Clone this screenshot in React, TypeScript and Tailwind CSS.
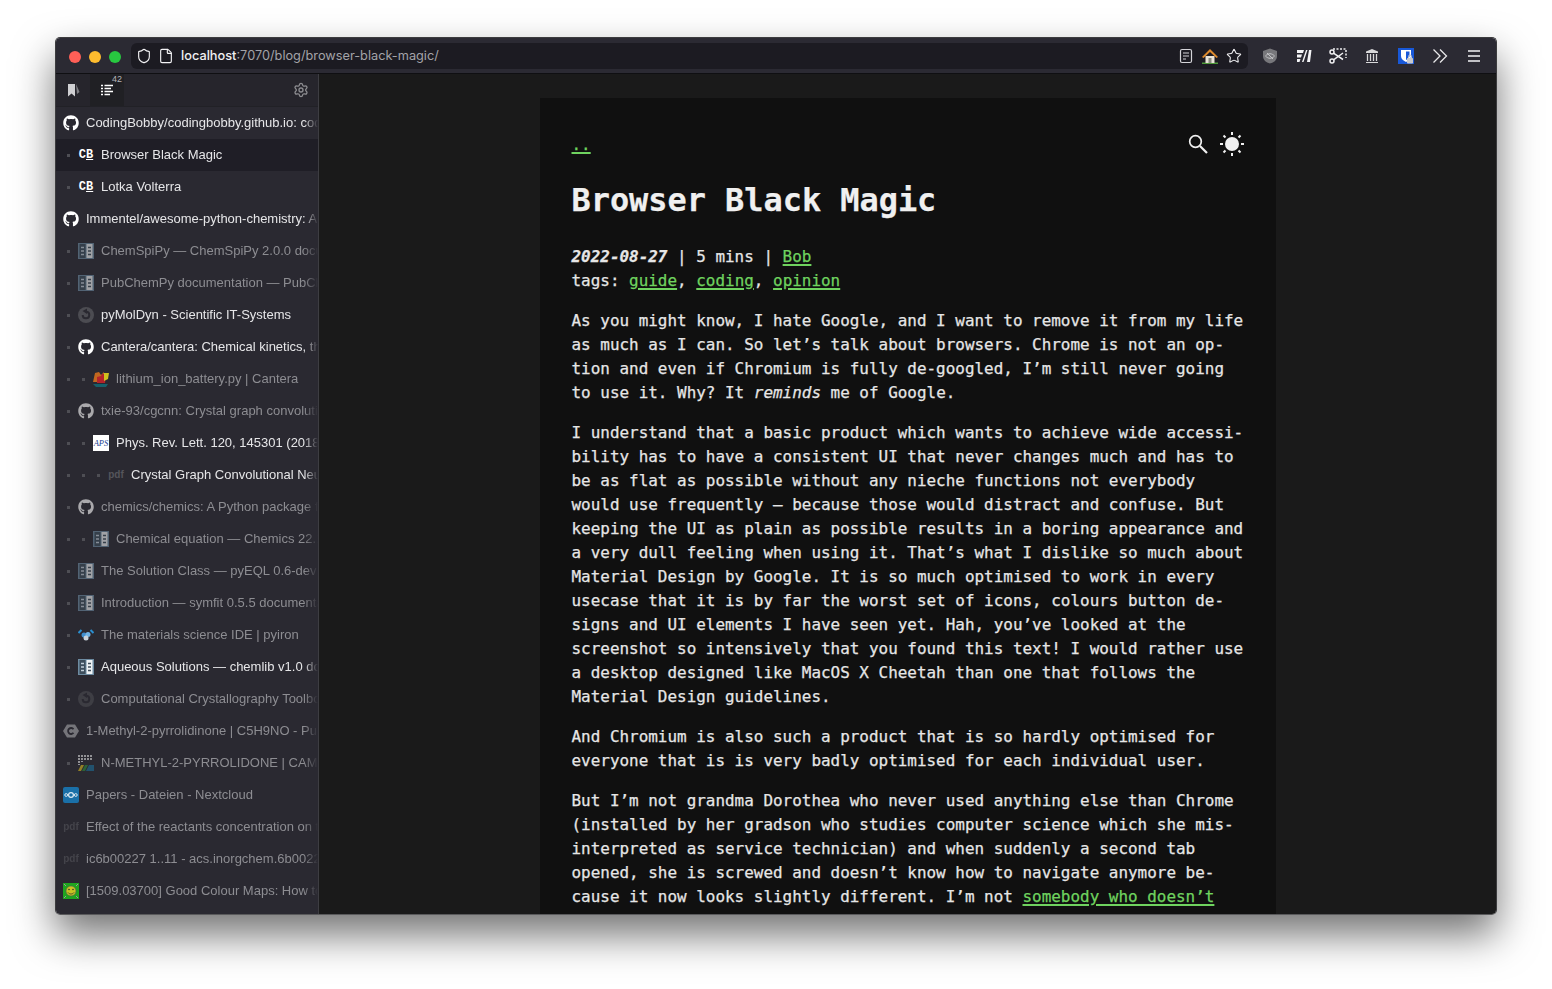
import React from 'react';
import { FaGithub } from 'react-icons/fa';
import { File, Settings, Shield, Star } from 'lucide-react';

type IconKind = 'github' | 'cb' | 'docs' | 'spin' | 'flame' | 'aps' | 'pdf' | 'pyiron' | 'hex' | 'cam' | 'cloud' | 'smile';

interface Row {
    title: string;
    level: number;
    icon: IconKind;
    dim?: boolean;
    active?: boolean;
}

const rows: Row[] = [
    { title: 'CodingBobby/codingbobby.github.io: coding blog', level: 0, icon: 'github' },
    { title: 'Browser Black Magic', level: 1, icon: 'cb', active: true },
    { title: 'Lotka Volterra', level: 1, icon: 'cb' },
    { title: 'Immentel/awesome-python-chemistry: A curated list', level: 0, icon: 'github' },
    { title: 'ChemSpiPy — ChemSpiPy 2.0.0 documentation', level: 1, icon: 'docs', dim: true },
    { title: 'PubChemPy documentation — PubChemPy', level: 1, icon: 'docs', dim: true },
    { title: 'pyMolDyn - Scientific IT-Systems', level: 1, icon: 'spin' },
    { title: 'Cantera/cantera: Chemical kinetics, thermodynamics', level: 1, icon: 'github' },
    { title: 'lithium_ion_battery.py | Cantera', level: 2, icon: 'flame', dim: true },
    { title: 'txie-93/cgcnn: Crystal graph convolutional', level: 1, icon: 'github', dim: true },
    { title: 'Phys. Rev. Lett. 120, 145301 (2018)', level: 2, icon: 'aps' },
    { title: 'Crystal Graph Convolutional Neural', level: 3, icon: 'pdf' },
    { title: 'chemics/chemics: A Python package for', level: 1, icon: 'github', dim: true },
    { title: 'Chemical equation — Chemics 22.1', level: 2, icon: 'docs', dim: true },
    { title: 'The Solution Class — pyEQL 0.6-dev documentation', level: 1, icon: 'docs', dim: true },
    { title: 'Introduction — symfit 0.5.5 documentation', level: 1, icon: 'docs', dim: true },
    { title: 'The materials science IDE | pyiron', level: 1, icon: 'pyiron', dim: true },
    { title: 'Aqueous Solutions — chemlib v1.0 documentation', level: 1, icon: 'docs' },
    { title: 'Computational Crystallography Toolbox', level: 1, icon: 'spin', dim: true },
    { title: '1-Methyl-2-pyrrolidinone | C5H9NO - PubChem', level: 0, icon: 'hex', dim: true },
    { title: 'N-METHYL-2-PYRROLIDONE | CAMEO Chemicals', level: 1, icon: 'cam', dim: true },
    { title: 'Papers - Dateien - Nextcloud', level: 0, icon: 'cloud', dim: true },
    { title: 'Effect of the reactants concentration on the', level: 0, icon: 'pdf', dim: true },
    { title: 'ic6b00227 1..11 - acs.inorgchem.6b00227', level: 0, icon: 'pdf', dim: true },
    { title: '[1509.03700] Good Colour Maps: How to Design', level: 0, icon: 'smile', dim: true },
];

// these favicons stay saturated even on unloaded tabs
const vivid: IconKind[] = ['pyiron', 'cloud', 'smile', 'flame'];

const DocsIcon = () => (
    <svg viewBox="0 0 16 16" className="w-4 h-4">
        <rect width="16" height="16" fill="#6d8ba1" />
        <rect x="1.500" y="1" width="6" height="14" fill="#3d4e5c" />
        <rect x="8.500" y="1" width="6" height="14" fill="#f0f3f5" />
        <path d="M3 4.500h3M3 8h3M3 11.500h3" stroke="#c3d0da" strokeWidth="1.500" />
        <path d="M10 4.500h3M10 8h3M10 11.500h3" stroke="#41505c" strokeWidth="1.500" />
    </svg>
);

const SpinIcon = () => (
    <svg viewBox="0 0 16 16" className="w-4 h-4">
        <circle cx="8" cy="8" r="8" fill="#4c4c52" />
        <path d="M8.500 4.800a3.300 3.300 0 1 1-3.800 3.200" fill="none" stroke="#2a2931" strokeWidth="2" />
        <path d="M9 1.500v5.500L4.500 4z" fill="#2a2931" />
    </svg>
);

const RowIcon: React.FC<{ kind: IconKind }> = ({ kind }) => {
    switch (kind) {
        case 'github':
            return <FaGithub className="w-4 h-4 text-white" />;
        case 'cb':
            return (
                <span className="w-4 h-4 flex items-center justify-center font-['Liberation_Mono',monospace] text-[12px] font-bold leading-none text-white">
                    C<span className="underline underline-offset-1">B</span>
                </span>
            );
        case 'docs':
            return <DocsIcon />;
        case 'spin':
            return <SpinIcon />;
        case 'flame':
            return (
                <svg viewBox="0 0 16 16" className="w-4 h-4">
                    <path d="M0 11 2 2l4-1 2 3 3-3v4l-2 6z" fill="#c2671f" />
                    <path d="M4 12V6l4-1 1-2 4 0-1 9z" fill="#b4232a" />
                    <path d="M11 2h5l-1 6-4 2z" fill="#d0c01f" />
                    <path d="M0 13h15l-2 3H3z" fill="#17606b" />
                </svg>
            );
        case 'aps':
            return (
                <span className="w-4 h-4 bg-white flex items-center justify-center font-['Liberation_Serif',serif] italic text-[8.5px] leading-none text-[#1c3f94]">
                    APS
                </span>
            );
        case 'pdf':
            return (
                <span className="w-4 h-4 flex items-center justify-center font-['Liberation_Sans',sans-serif] text-[10px] font-bold leading-none text-[#55555b]">
                    pdf
                </span>
            );
        case 'pyiron':
            return (
                <svg viewBox="0 0 16 16" className="w-4 h-4">
                    <path d="M0.500 6l3-3M12.500 3l3 3" stroke="#2a8fd0" strokeWidth="2" />
                    <circle cx="6" cy="8" r="2.500" fill="#3f8fd0" />
                    <circle cx="10" cy="7.500" r="2.500" fill="#6fb2e4" />
                    <circle cx="8" cy="11" r="2.500" fill="#c9d3dc" />
                </svg>
            );
        case 'hex':
            return (
                <svg viewBox="0 0 16 16" className="w-4 h-4">
                    <path d="M4 1.500h8L16 8l-4 6.500H4L0 8z" fill="#a8a8ac" />
                    <path d="M10.500 6.200a3 3 0 1 0 0 3.600" fill="none" stroke="#2a2931" strokeWidth="1.800" />
                </svg>
            );
        case 'cam':
            return (
                <svg viewBox="0 0 16 16" className="w-4 h-4">
                    <rect width="16" height="16" fill="#2a2931" />
                    <path d="M1 0v10M4 0v7M7 0v6M10 0v5M13 0v5" stroke="#d8d8da" strokeWidth="2" strokeDasharray="2 1" />
                    <path d="M0 16 3 10h3l-3 6z" fill="#d9b81f" />
                    <path d="M4 16l3-6h3l-3 6z" fill="#2e8b3c" />
                    <path d="M8 16l3-6h5v6z" fill="#1d6e98" />
                </svg>
            );
        case 'cloud':
            return (
                <svg viewBox="0 0 16 16" className="w-4 h-4">
                    <rect width="16" height="16" rx="2" fill="#1a70a8" />
                    <circle cx="8" cy="8" r="2.400" fill="none" stroke="#d9e8f2" strokeWidth="1.200" />
                    <circle cx="3.200" cy="8" r="1.400" fill="none" stroke="#d9e8f2" strokeWidth="1" />
                    <circle cx="12.800" cy="8" r="1.400" fill="none" stroke="#d9e8f2" strokeWidth="1" />
                </svg>
            );
        case 'smile':
            return (
                <svg viewBox="0 0 16 16" className="w-4 h-4">
                    <rect width="16" height="16" fill="#1fa51f" />
                    <circle cx="8" cy="8" r="5" fill="#c8c421" stroke="#555" strokeWidth="0.600" />
                    <circle cx="6" cy="6.500" r="0.800" fill="#333" />
                    <circle cx="10" cy="6.500" r="0.800" fill="#333" />
                    <path d="M5 9.500c1.500 2 4.500 2 6 0" fill="none" stroke="#333" strokeWidth="0.800" />
                    <path d="M1 1l2 2M15 1l-2 2M1 15l2-2M15 15l-2-2" stroke="#999" strokeWidth="1" />
                </svg>
            );
    }
};

const TreeRow: React.FC<{ row: Row }> = ({ row }) => (
    <div className={`h-8 flex items-center pl-1 overflow-hidden ${row.active ? 'bg-[#1f1e26]' : ''}`}>
        {Array.from({ length: row.level }).map((_, i) => (
            <span key={i} className="w-[15px] shrink-0 flex justify-center pl-[1px]">
                <span className="w-[3px] h-[3px] bg-[#4e4e54]" />
            </span>
        ))}
        <span className={`ml-[3px] w-4 h-4 shrink-0 ${row.dim && !vivid.includes(row.icon) ? 'opacity-60' : ''}`}>
            <RowIcon kind={row.icon} />
        </span>
        <span className={`ml-[7px] flex-1 whitespace-nowrap overflow-hidden text-[13px] leading-8 [mask-image:linear-gradient(to_left,transparent,black_14px)] ${row.dim ? 'text-[#8d8d92]' : 'text-[#e6e6e8]'}`}>
            {row.title}
        </span>
    </div>
);

const Sidebar = () => (
    <aside className="w-[263px] shrink-0 bg-[#2a2931] border-r border-[#3d3d42] overflow-hidden font-['Liberation_Sans',sans-serif]">
        <div className="h-[33px] flex bg-[#26252c] border-b border-[#212126]">
            <div className="w-[34px] flex items-center justify-center">
                <svg viewBox="0 0 14 14" className="w-[14px] h-[14px]">
                    <path d="M2 1h7v12.500L5.500 10.500 2 13.500z" fill="#d0d0d3" />
                    <path d="M10 1l3.500 8-2.500 2z" fill="#808085" />
                </svg>
            </div>
            <div className="relative w-[34px] bg-[#202024] flex items-center justify-center">
                <svg viewBox="0 0 12 12" className="w-3 h-3">
                    <path d="M0 1.500h2M3.500 1.500H12M0 4.500h2M3.500 4.500H10M0 7.500h2M3.500 7.500H12M0 10.500h2M3.500 10.500H9" stroke="#fff" strokeWidth="1.500" />
                </svg>
                <span className="absolute top-0 right-[2px] text-[9px] leading-[10px] text-[#b5b5b8]">42</span>
            </div>
            <div className="ml-auto w-[34px] flex items-center justify-center">
                <Settings className="w-4 h-4 text-[#8c8c90]" strokeWidth={2} />
            </div>
        </div>
        {rows.map((row) => (
            <TreeRow key={row.title} row={row} />
        ))}
    </aside>
);

const Toolbar = () => (
    <header className="h-[36px] shrink-0 flex items-center bg-[#2b2a33] border-b border-[#0f0f12]">
        <div className="flex gap-2 pl-[13px] mt-[3px]">
            <span className="w-3 h-3 rounded-full bg-[#ff5f57]" />
            <span className="w-3 h-3 rounded-full bg-[#febc2e]" />
            <span className="w-3 h-3 rounded-full bg-[#28c840]" />
        </div>
        <div className="ml-[10px] flex-1 h-[26px] rounded-md bg-[#1c1b22] flex items-center pl-[5px] pr-[6px]">
            <Shield className="w-4 h-4 text-[#f4f4f6]" strokeWidth={1.7} />
            <File className="ml-[6px] w-4 h-4 text-[#f4f4f6]" strokeWidth={1.7} />
            <span className="ml-[7px] text-[12.75px] font-['Inter',sans-serif] text-[#a3a3a8]">
                <span className="font-medium text-[#f0f0f2]">localhost</span>:7070/blog/browser-black-magic/
            </span>
            <div className="ml-auto flex items-center gap-2">
                <svg viewBox="0 0 16 16" className="w-4 h-4">
                    <rect x="2.500" y="1.500" width="11" height="13" rx="1.500" fill="none" stroke="#d4d4d8" strokeWidth="1.200" />
                    <path d="M5 5h6M5 8h6M5 11h3" stroke="#d4d4d8" strokeWidth="1.200" />
                </svg>
                <svg viewBox="0 0 16 16" className="w-4 h-4">
                    <path d="M0 14.500h16V16H0z" fill="#4f9a3a" />
                    <path d="M3.500 8h9v7h-9z" fill="#e9e4d8" />
                    <path d="M6.500 10h3v5h-3z" fill="#8a8a80" />
                    <path d="M8 1 0 9l1.500 1L8 4l6.500 6L16 9z" fill="#dd8a2c" />
                </svg>
                <Star className="w-4 h-4 text-[#eeeef0]" strokeWidth={1.6} />
            </div>
        </div>
        <div className="ml-[5px] pr-[5px] flex">
            <span className="w-[34px] flex justify-center">
                <svg viewBox="0 0 16 16" className="w-4 h-4">
                    <path d="M8 .5 15 3v5c0 4-3 6.500-7 7.500C4 14.500 1 12 1 8V3z" fill="#77777b" />
                    <path d="M3.500 8c2.500-3 6.500-3 9 0-2.500 3-6.500 3-9 0z" fill="none" stroke="#c4c4c7" strokeWidth="1" />
                    <path d="M5 5l6 6" stroke="#c4c4c7" strokeWidth="1" />
                </svg>
            </span>
            <span className="w-[34px] flex justify-center">
                <svg viewBox="0 0 16 16" className="w-4 h-4">
                    <path d="M1 2h7L7 5H1zM1 6.500h5l-1 3H1zM1 11h3.500l-1 3H1zM10 2h1.500L7.500 14H6zM13 2h2.500L14 14h-3z" fill="#f4f4f6" />
                </svg>
            </span>
            <span className="w-[34px] flex justify-center">
                <svg viewBox="0 0 18 16" className="w-[18px] h-4" fill="none" stroke="#f0f0f2">
                    <circle cx="3" cy="4" r="2" strokeWidth="1.500" />
                    <circle cx="3" cy="13" r="2" strokeWidth="1.500" />
                    <path d="M4.500 5.200 14 11.500M4.500 11.800 14 5" strokeWidth="1.500" />
                    <path d="M4 1h13v9" strokeWidth="1.500" strokeDasharray="2 1.500" />
                </svg>
            </span>
            <span className="w-[34px] flex justify-center">
                <svg viewBox="0 0 16 16" className="w-4 h-4">
                    <path d="M2 3.500 8 1l6 2.500V5H2z" fill="#d8d8da" />
                    <path d="M3.500 6v7M6.500 6v7M9.500 6v7M12.500 6v7" stroke="#d8d8da" strokeWidth="1.300" />
                    <path d="M2 14h12v1H2z" fill="#d8d8da" />
                </svg>
            </span>
            <span className="w-[34px] flex justify-center">
                <svg viewBox="0 0 16 16" className="w-4 h-4">
                    <rect width="16" height="16" fill="#1858d8" />
                    <path d="M3 2h10v6c0 3-2 4.500-5 6-3-1.500-5-3-5-6z" fill="#fff" />
                    <path d="M8 3.500h3.500V8c0 1.500-1.500 3-3.500 4z" fill="#1858d8" />
                    <rect x="9" y="10" width="6" height="5.500" rx="0.800" fill="#c9c9cc" />
                    <path d="M10.500 10V8.500a1.500 1.500 0 0 1 3 0V10" fill="none" stroke="#c9c9cc" strokeWidth="1" />
                </svg>
            </span>
            <span className="w-[34px] flex justify-center">
                <svg viewBox="0 0 16 16" className="w-4 h-4" fill="none" stroke="#e8e8ea" strokeWidth="1.300">
                    <path d="M1.500 1.500 8 8l-6.500 6.500M8 1.500 14.500 8 8 14.500" />
                </svg>
            </span>
            <span className="w-[34px] flex justify-center">
                <svg viewBox="0 0 16 16" className="w-4 h-4" stroke="#f4f4f6" strokeWidth="1.300">
                    <path d="M2 3h12M2 8h12M2 13h12" />
                </svg>
            </span>
        </div>
    </header>
);

const A: React.FC<{ children: React.ReactNode }> = ({ children }) => (
    <a className="text-[#6fd35f] underline underline-offset-2 decoration-[1.5px]">{children}</a>
);

// one entry per rendered line, the hyphenation in the picture is kept by hand
const paragraphs: React.ReactNode[][] = [
    [
        'As you might know, I hate Google, and I want to remove it from my life',
        'as much as I can. So let’s talk about browsers. Chrome is not an op-',
        'tion and even if Chromium is fully de-googled, I’m still never going',
        <>to use it. Why? It <em>reminds</em> me of Google.</>,
    ],
    [
        'I understand that a basic product which wants to achieve wide accessi-',
        'bility has to have a consistent UI that never changes much and has to',
        'be as flat as possible without any nieche functions not everybody',
        'would use frequently – because those would distract and confuse. But',
        'keeping the UI as plain as possible results in a boring appearance and',
        'a very dull feeling when using it. That’s what I dislike so much about',
        'Material Design by Google. It is so much optimised to work in every',
        'usecase that it is by far the worst set of icons, colours button de-',
        'signs and UI elements I have seen yet. Hah, you’ve looked at the',
        'screenshot so intensively that you found this text! I would rather use',
        'a desktop designed like MacOS X Cheetah than one that follows the',
        'Material Design guidelines.',
    ],
    [
        'And Chromium is also such a product that is so hardly optimised for',
        'everyone that is is very badly optimised for each individual user.',
    ],
    [
        'But I’m not grandma Dorothea who never used anything else than Chrome',
        '(installed by her gradson who studies computer science which she mis-',
        'interpreted as service technician) and when suddenly a second tab',
        'opened, she is screwed and doesn’t know how to navigate anymore be-',
        <>cause it now looks slightly different. I’m not <A>somebody who doesn’t</A></>,
        <A>know how to use a computer</A>,
    ],
];

const Article = () => (
    <article className="w-[736px] h-[900px] bg-[#101010] px-8 pt-[34px] text-[15.95px] leading-6 text-[#e6e6e6] [-webkit-text-stroke:0.25px] font-['DejaVu_Sans_Mono',monospace] overflow-hidden">
        <div className="h-6 flex justify-between">
            <div className="mt-[1px]"><A>..</A></div>
            <div className="flex items-center gap-3 text-[#f0f0f0]">
                <svg viewBox="0 0 20 20" className="w-5 h-5" fill="none" stroke="currentColor">
                    <circle cx="7.500" cy="7.500" r="5.800" strokeWidth="1.700" />
                    <path d="m12 12 7 7" strokeWidth="2.200" />
                </svg>
                <svg viewBox="0 0 24 24" className="w-6 h-6" fill="currentColor">
                    <circle cx="12" cy="12" r="7" />
                    <path d="M12 0v3M12 21v3M0 12h3M21 12h3M3.500 3.500l2 2M18.500 18.500l2 2M3.500 20.500l2-2M18.500 5.500l2-2" stroke="currentColor" strokeWidth="2" />
                </svg>
            </div>
        </div>
        <h1 className="mt-6 mb-[25px] text-[31.9px] leading-10 font-bold text-[#f0f0f0]">Browser Black Magic</h1>
        <div><em className="font-bold">2022-08-27</em> | 5 mins | <A>Bob</A></div>
        <div>tags: <A>guide</A>, <A>coding</A>, <A>opinion</A></div>
        {paragraphs.map((lines, i) => (
            <p key={i} className="mt-4">
                {lines.map((line, j) => (
                    <span key={j} className="block whitespace-pre">{line}</span>
                ))}
            </p>
        ))}
    </article>
);

const App: React.FC = () => (
    <div className="w-[1552px] h-[989px] overflow-hidden bg-white pt-[37px] pl-[55px]">
        <div className="w-[1442px] h-[878px] flex flex-col rounded-[5px] overflow-hidden border border-[#3c3c3e] border-b-[#5a5a5c] shadow-[0_20px_40px_rgba(0,0,0,0.55)]">
            <Toolbar />
            <div className="flex flex-1 min-h-0">
                <Sidebar />
                <main className="flex-1 bg-[#1a1a1a] flex justify-center pt-6 overflow-hidden">
                    <Article />
                </main>
            </div>
        </div>
    </div>
);

export default App;
